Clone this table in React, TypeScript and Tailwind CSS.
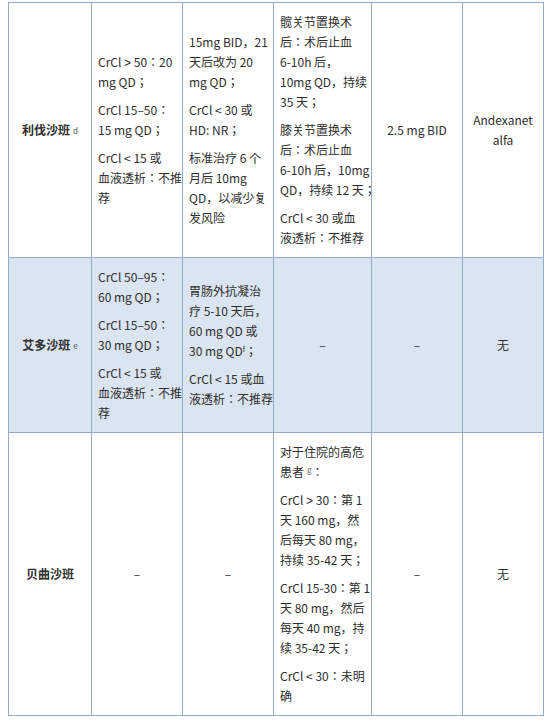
const border = 'border border-[#94aacd]';

type Para = string[];

function Lines({ paras }: { paras: Para[] }) {
  return (
    <div className="flex flex-col gap-[8px]">
      {paras.map((p, i) => (
        <p key={i} className="whitespace-nowrap">
          {p.map((l, j) => (
            <span key={j} className="block">
              {l}
            </span>
          ))}
        </p>
      ))}
    </div>
  );
}

function Sup({ children }: { children: string }) {
  return <sup className="ml-[3px] text-[8px] font-normal text-[#555] relative -top-[1px]">{children}</sup>;
}

export default function App() {
  return (
    <div className="bg-white w-[550px] h-[723px] pt-[2px] pl-[8px] text-[12px] leading-[20px] text-[#2e2e2e]"
      style={{ fontFamily: '"Noto Sans CJK JP", "Noto Sans CJK SC", sans-serif' }}>
      <table className="border-collapse table-fixed w-[535px]">
        <colgroup>
          <col className="w-[83px]" />
          <col className="w-[91px]" />
          <col className="w-[91px]" />
          <col className="w-[98px]" />
          <col className="w-[91px]" />
          <col className="w-[81px]" />
        </colgroup>
        <tbody>
          {/* 利伐沙班 */}
          <tr className="align-middle">
            <td className={`${border} text-center font-bold`}>
              利伐沙班<Sup>d</Sup>
            </td>
            <td className={`${border} px-[6px] py-[9px]`}>
              <Lines paras={[['CrCl ˃ 50：20', 'mg QD；'], ['CrCl 15–50：', '15 mg QD；'], ['CrCl < 15 或', '血液透析：不推', '荐']]} />
            </td>
            <td className={`${border} px-[6px] py-[9px]`}>
              <Lines paras={[['15mg BID，21', '天后改为 20', 'mg QD；'], ['CrCl < 30 或', 'HD: NR；'], ['标准治疗 6 个', '月后 10mg', 'QD，以减少复', '发风险']]} />
            </td>
            <td className={`${border} px-[6px] py-[9px]`}>
              <Lines paras={[['髋关节置换术', '后：术后止血', '6-10h 后，', '10mg QD，持续', '35 天；'], ['膝关节置换术', '后：术后止血', '6-10h 后，10mg', 'QD，持续 12 天；'], ['CrCl < 30 或血', '液透析：不推荐']]} />
            </td>
            <td className={`${border} text-center`}>2.5 mg BID</td>
            <td className={`${border} text-center`}>
              Andexanet
              <br />
              alfa
            </td>
          </tr>

          {/* 艾多沙班 */}
          <tr className="align-middle bg-[#dbe5f1]">
            <td className={`${border} text-center font-bold`}>
              艾多沙班<Sup>e</Sup>
            </td>
            <td className={`${border} px-[6px] py-[9px]`}>
              <Lines paras={[['CrCl 50–95：', '60 mg QD；'], ['CrCl 15–50：', '30 mg QD；'], ['CrCl < 15 或', '血液透析：不推', '荐']]} />
            </td>
            <td className={`${border} px-[6px] py-[9px]`}>
              <div className="flex flex-col gap-[8px]">
                <p className="whitespace-nowrap">
                  <span className="block">胃肠外抗凝治</span>
                  <span className="block">疗 5-10 天后，</span>
                  <span className="block">60 mg QD 或</span>
                  <span className="block">
                    30 mg QD<sup className="text-[7px] -top-[4px]">f</sup>；
                  </span>
                </p>
                <p className="whitespace-nowrap">
                  <span className="block">{'CrCl < 15 或血'}</span>
                  <span className="block">液透析：不推荐</span>
                </p>
              </div>
            </td>
            <td className={`${border} text-center`}>–</td>
            <td className={`${border} text-center`}>–</td>
            <td className={`${border} text-center`}>无</td>
          </tr>

          {/* 贝曲沙班 */}
          <tr className="align-middle">
            <td className={`${border} text-center font-bold`}>贝曲沙班</td>
            <td className={`${border} text-center`}>–</td>
            <td className={`${border} text-center`}>–</td>
            <td className={`${border} px-[6px] py-[9px]`}>
              <div className="flex flex-col gap-[8px]">
                <p className="whitespace-nowrap">
                  <span className="block">对于住院的高危</span>
                  <span className="block">
                    患者<sup className="ml-[3px] text-[8px] text-[#666]">g</sup>：
                  </span>
                </p>
                <Lines paras={[['CrCl ˃ 30：第 1', '天 160 mg，然', '后每天 80 mg，', '持续 35-42 天；'], ['CrCl 15-30：第 1', '天 80 mg，然后', '每天 40 mg，持', '续 35-42 天；'], ['CrCl < 30：未明', '确']]} />
              </div>
            </td>
            <td className={`${border} text-center`}>–</td>
            <td className={`${border} text-center`}>无</td>
          </tr>
        </tbody>
      </table>
    </div>
  );
}
